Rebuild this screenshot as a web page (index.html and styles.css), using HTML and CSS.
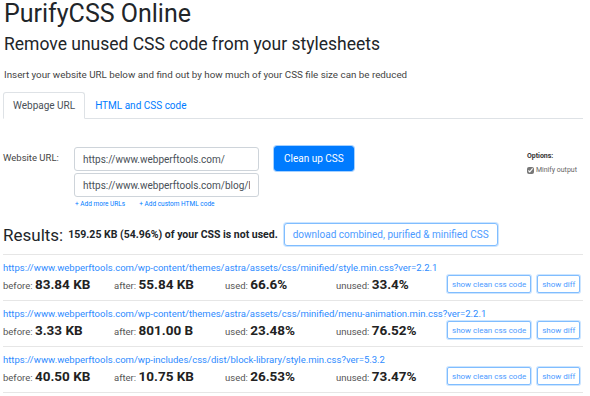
FILE: index.html
```html
<!DOCTYPE html>
<html lang="en">
<head>
    <meta charset="UTF-8">
    <meta name="viewport" content="width=device-width, initial-scale=1.0">
    <title>PurifyCSS Online</title>
    <link rel="stylesheet" href="styles.css">
</head>
<body>
    <div class="container">
        <h1>PurifyCSS Online</h1>
        <h2>Remove unused CSS code from your stylesheets</h2>
        <p class="lead">Insert your website URL below and find out by how much of your CSS file size can be reduced</p>

        <ul class="tabs">
            <li class="tab active">Webpage URL</li>
            <li class="tab">HTML and CSS code</li>
        </ul>

        <div class="form">
            <label class="label">Website URL:</label>
            <div class="inputs">
                <input type="text" value="https://www.webperftools.com/">
                <input type="text" value="https://www.webperftools.com/blog/how-to-remove-unused-css">
                <div class="add-links">
                    <a href="#">+ Add more URLs</a>
                    <a href="#">+ Add custom HTML code</a>
                </div>
            </div>
            <button class="btn-primary">Clean up CSS</button>
            <div class="options">
                <div class="options-title">Options:</div>
                <label class="check"><input type="checkbox" checked> Minify output</label>
            </div>
        </div>

        <div class="results">
            <span class="results-title">Results:</span>
            <strong class="summary">159.25 KB (54.96%) of your CSS is not used.</strong>
            <button class="btn-outline">download combined, purified &amp; minified CSS</button>
        </div>

        <div class="files">
            <div class="file">
                <a href="#" class="file-url">https://www.webperftools.com/wp-content/themes/astra/assets/css/minified/style.min.css?ver=2.2.1</a>
                <div class="stats">
                    <span class="stat">before: <b>83.84 KB</b></span>
                    <span class="stat">after: <b>55.84 KB</b></span>
                    <span class="stat">used: <b>66.6%</b></span>
                    <span class="stat">unused: <b>33.4%</b></span>
                    <div class="actions">
                        <button class="btn-sm">show clean css code</button>
                        <button class="btn-sm">show diff</button>
                    </div>
                </div>
            </div>
            <div class="file">
                <a href="#" class="file-url">https://www.webperftools.com/wp-content/themes/astra/assets/css/minified/menu-animation.min.css?ver=2.2.1</a>
                <div class="stats">
                    <span class="stat">before: <b>3.33 KB</b></span>
                    <span class="stat">after: <b>801.00 B</b></span>
                    <span class="stat">used: <b>23.48%</b></span>
                    <span class="stat">unused: <b>76.52%</b></span>
                    <div class="actions">
                        <button class="btn-sm">show clean css code</button>
                        <button class="btn-sm">show diff</button>
                    </div>
                </div>
            </div>
            <div class="file">
                <a href="#" class="file-url">https://www.webperftools.com/wp-includes/css/dist/block-library/style.min.css?ver=5.3.2</a>
                <div class="stats">
                    <span class="stat">before: <b>40.50 KB</b></span>
                    <span class="stat">after: <b>10.75 KB</b></span>
                    <span class="stat">used: <b>26.53%</b></span>
                    <span class="stat">unused: <b>73.47%</b></span>
                    <div class="actions">
                        <button class="btn-sm">show clean css code</button>
                        <button class="btn-sm">show diff</button>
                    </div>
                </div>
            </div>
        </div>
    </div>
</body>
</html>
```

FILE: styles.css
```css
body {
    margin: 0;
    background-color: #fff;
    color: #212529;
    font-family: Roboto, "Noto Sans", sans-serif;
    overflow: hidden;
}

.container {
    padding: 0 7px 0 3px;
}

h1 {
    margin: 0;
    padding-left: 1px;
    font-size: 25px;
    font-weight: 400;
    line-height: 28px;
}

h2 {
    margin: 5px 0 0;
    padding-left: 1px;
    font-size: 17.5px;
    font-weight: 400;
    line-height: 22px;
}

.lead {
    margin: 14px 0 0;
    padding-left: 1px;
    font-size: 9.8px;
    line-height: 12px;
    color: #444;
}

.tabs {
    display: flex;
    margin: 11px 0 0;
    padding: 0;
    list-style: none;
    border-bottom: 1px solid #dee2e6;
}

.tab {
    padding: 6px 9px;
    margin-bottom: -1px;
    font-size: 10px;
    line-height: 13px;
    color: #007bff;
    border: 1px solid transparent;
    border-radius: 3px 3px 0 0;
}

.tab.active {
    color: #495057;
    background-color: #fff;
    border-color: #dee2e6 #dee2e6 #fff;
}

.form {
    display: flex;
    align-items: flex-start;
    margin-top: 28px;
}

.label {
    width: 71px;
    padding-top: 5px;
    font-size: 9.5px;
    color: #444;
}

.inputs {
    display: flex;
    flex-direction: column;
    gap: 2px;
    width: 185px;
}

.inputs input {
    box-sizing: border-box;
    height: 24px;
    padding: 0 8px;
    font-family: inherit;
    font-size: 10px;
    color: #495057;
    border: 1px solid #ced4da;
    border-radius: 3px;
}

.add-links {
    display: flex;
    gap: 14px;
    padding: 1px 0 0 1px;
}

.add-links a {
    font-size: 6.5px;
    color: #007bff;
    text-decoration: none;
}

.btn-primary {
    height: 25px;
    margin: -1px 0 0 15px;
    padding: 0 9px;
    font-family: inherit;
    font-size: 10px;
    color: #fff;
    background-color: #007bff;
    border: 1px solid #007bff;
    border-radius: 3px;
    box-shadow: 0 0 0 1px rgba(0, 123, 255, 0.35);
}

.options {
    margin: 5px 6px 0 auto;
    font-size: 7px;
    color: #666;
}

.options-title {
    font-weight: 700;
    color: #333;
}

.check {
    display: flex;
    align-items: center;
    gap: 2px;
    margin-top: 6px;
}

.check input {
    width: 7px;
    height: 7px;
    margin: 0;
    accent-color: #777;
}

.results {
    display: flex;
    align-items: center;
    margin-top: 15px;
    padding-bottom: 8px;
}

.results-title {
    font-size: 17px;
}

.summary {
    margin-left: 5px;
    font-size: 10.5px;
}

.btn-outline {
    height: 23px;
    margin-left: 6px;
    padding: 0 8px;
    font-family: inherit;
    font-size: 10px;
    color: #4d9bff;
    background: #fff;
    border: 1px solid #80bdff;
    border-radius: 3px;
    box-shadow: 0 0 0 1px rgba(0, 123, 255, 0.2);
}

.file {
    border-top: 1px solid #e6e6e6;
    padding: 6px 0 7px;
}

.file:last-child {
    border-bottom: 1px solid #e6e6e6;
}

.file-url {
    display: block;
    font-size: 9.5px;
    line-height: 13px;
    color: #2e8bff;
    text-decoration: none;
    white-space: nowrap;
}

.stats {
    display: grid;
    grid-template-columns: repeat(4, 111px) auto;
    align-items: center;
    margin-top: 1px;
}

.stat {
    font-size: 9.5px;
    color: #555;
}

.stat b {
    font-size: 13.5px;
    color: #222;
}

.actions {
    display: flex;
    gap: 6px;
}

.btn-sm {
    height: 18px;
    padding: 0 4px;
    font-family: inherit;
    font-size: 8px;
    color: #4d9bff;
    background: #fff;
    border: 1px solid #80bdff;
    border-radius: 2px;
    box-shadow: 0 0 0 1px rgba(0, 123, 255, 0.2);
}
```
